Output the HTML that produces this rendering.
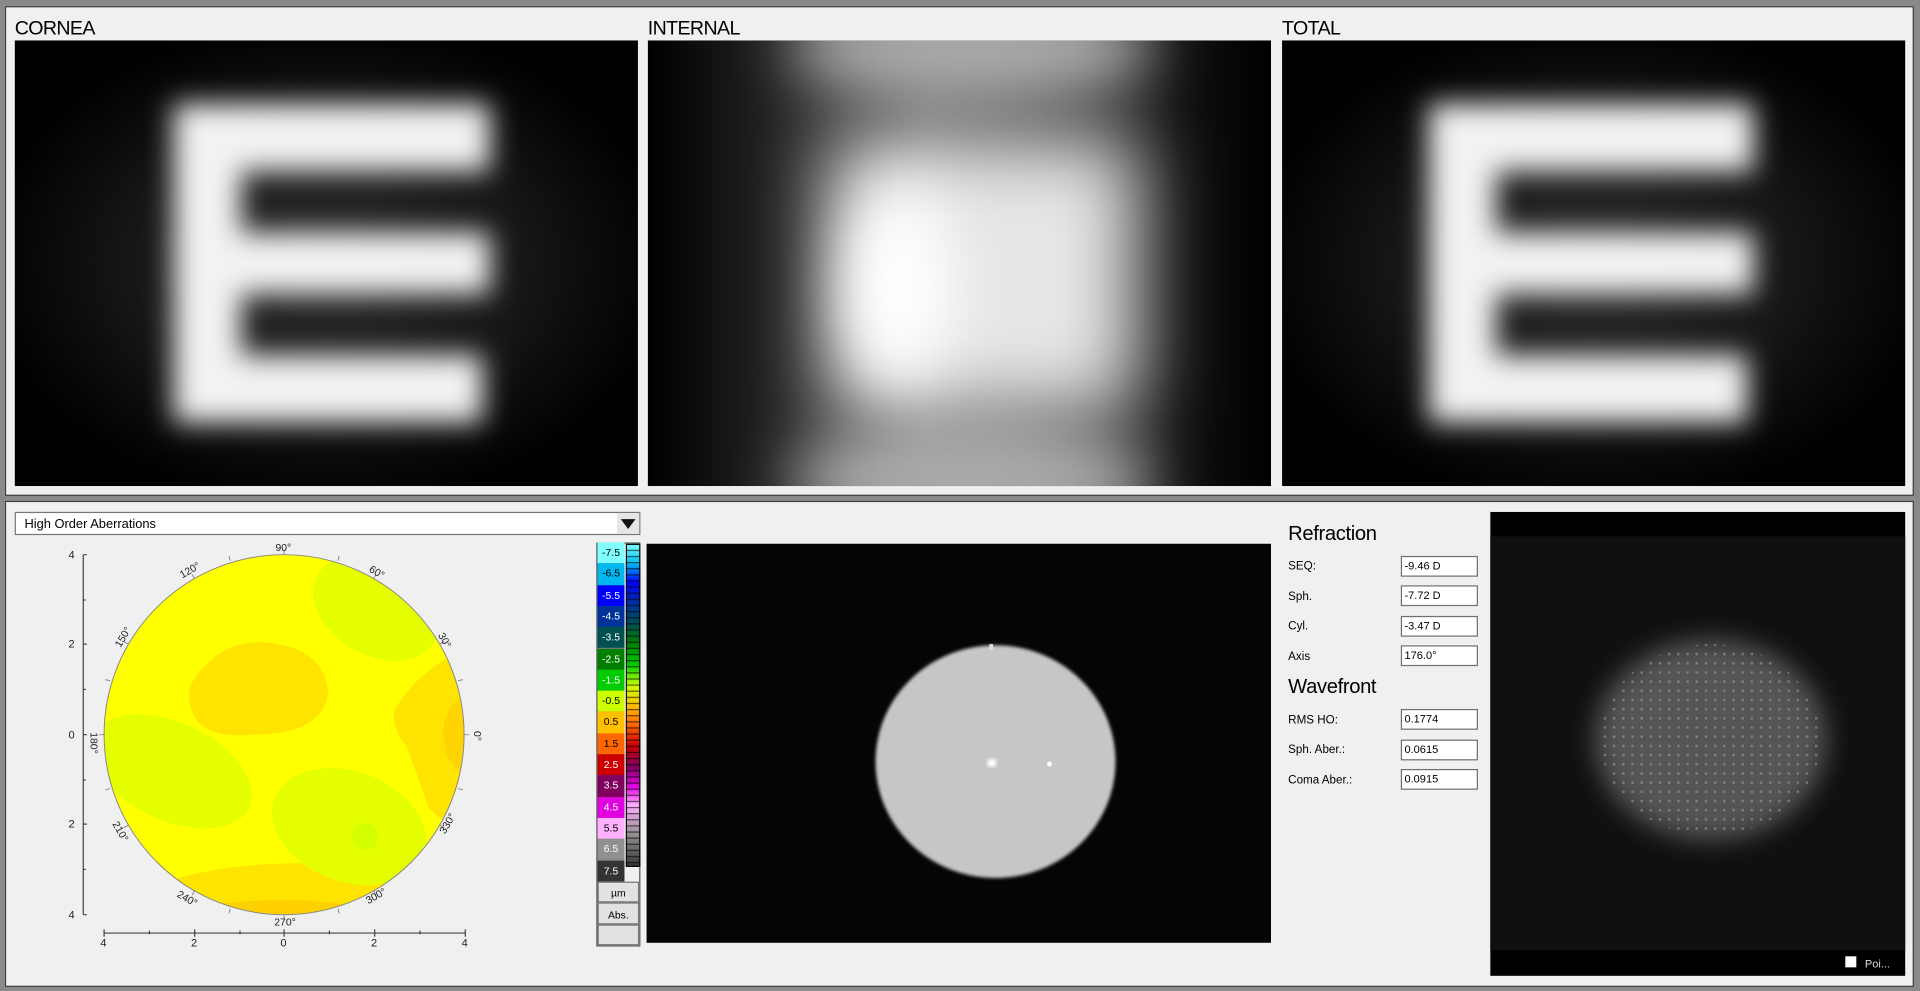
<!DOCTYPE html>
<html><head><meta charset="utf-8"><style>
html,body{margin:0;padding:0;background:#8a8a8a;width:1920px;height:991px;overflow:hidden}
#w{position:absolute;left:0;top:0;width:1568px;height:809px;transform:scale(1.22449);transform-origin:0 0;font-family:"Liberation Sans",sans-serif;color:#000}
.panel{position:absolute;background:#f0f0f0;border:1px solid #3a3a3a}
.abs{position:absolute}
.t{position:absolute;font-size:16px;letter-spacing:-0.5px}
.lbl{position:absolute;font-size:9.5px;left:1052px}
.box{position:absolute;left:1144px;width:59px;height:15px;border:1px solid #707070;background:#fff;font-size:9px;line-height:15px;padding-left:2px;box-sizing:content-box}
.cb{position:absolute;left:488px;width:22px;height:17.3px;font-size:8.5px;text-align:center;line-height:17px;border-bottom:1px solid #777}
</style></head><body><div id="w">
<div class="panel" style="left:4px;top:5px;width:1557px;height:398px"></div>
<div class="panel" style="left:4px;top:409px;width:1557px;height:395px"></div>
<div class="t" style="left:12px;top:15px">CORNEA</div>
<div class="t" style="left:529px;top:15px">INTERNAL</div>
<div class="t" style="left:1047px;top:15px">TOTAL</div>

<svg class="abs" style="left:12px;top:33px" width="509" height="364">
<defs><filter id="b1" x="-30%" y="-30%" width="160%" height="160%"><feGaussianBlur stdDeviation="11"/></filter>
<radialGradient id="rg" cx="0.5" cy="0.5" r="0.55"><stop offset="0" stop-color="#2c2c2c"/><stop offset="0.6" stop-color="#151515"/><stop offset="1" stop-color="#000"/></radialGradient></defs>
<rect width="509" height="364" fill="url(#rg)"/>
<g fill="#f2f2f2" filter="url(#b1)"><rect x="130" y="52" width="55" height="260"/><rect x="130" y="52" width="258" height="55"/><rect x="130" y="157" width="258" height="50"/><rect x="130" y="257" width="252" height="55"/></g>
</svg>

<svg class="abs" style="left:1047px;top:33px" width="509" height="364">
<rect width="509" height="364" fill="url(#rg)"/>
<g fill="#f2f2f2" filter="url(#b1)"><rect x="120" y="52" width="55" height="260"/><rect x="120" y="52" width="265" height="55"/><rect x="120" y="157" width="265" height="50"/><rect x="120" y="257" width="260" height="55"/></g>
</svg>

<svg class="abs" style="left:529px;top:33px" width="509" height="364">
<defs><filter id="b2" x="-60%" y="-60%" width="220%" height="220%"><feGaussianBlur stdDeviation="32"/></filter>
<filter id="b3" x="-60%" y="-100%" width="220%" height="300%"><feGaussianBlur stdDeviation="24"/></filter>
<linearGradient id="ig" x1="0" x2="1"><stop offset="0" stop-color="#000"/><stop offset="0.2" stop-color="#222"/><stop offset="0.45" stop-color="#555"/><stop offset="0.7" stop-color="#333"/><stop offset="0.85" stop-color="#111"/><stop offset="1" stop-color="#000"/></linearGradient></defs>
<rect width="509" height="364" fill="url(#ig)"/>
<ellipse cx="265" cy="5" rx="150" ry="45" fill="#aaa" filter="url(#b3)"/>
<ellipse cx="265" cy="360" rx="150" ry="45" fill="#aaa" filter="url(#b3)"/>
<rect x="150" y="80" width="250" height="225" fill="#e6e6e6" filter="url(#b2)"/>
<ellipse cx="205" cy="200" rx="45" ry="80" fill="#fff" filter="url(#b3)"/>
</svg>

<div class="abs" style="left:12px;top:418px;height:19px;border:1px solid #777;background:#fff;font-size:10.5px;line-height:19px;padding-left:7px;box-sizing:border-box;width:511px">High Order Aberrations
<div class="abs" style="right:0;top:0;width:18px;height:17px;background:#e5e5e5"><svg width="18" height="17"><path d="M3 5 L15 5 L9 13 Z" fill="#111"/></svg></div></div>

<svg class="abs" style="left:40px;top:440px" width="360" height="345" font-family="Liberation Sans" font-size="8.5">
<defs><clipPath id="cc"><circle cx="192" cy="160" r="147"/></clipPath></defs>
<g clip-path="url(#cc)">
<rect x="40" y="10" width="310" height="300" fill="#ffff00"/>
<ellipse cx="205" cy="313" rx="150" ry="48" fill="#ffe400"/>
<ellipse cx="190" cy="330" rx="120" ry="35" fill="#ffd000"/>
<path d="M115 120 Q140 80 180 85 Q225 90 228 125 Q225 160 165 160 Q110 165 115 120Z" fill="#ffe400"/>
<ellipse cx="267" cy="57" rx="55" ry="38" transform="rotate(30 267 57)" fill="#e6ff00"/>
<path d="M282 140 Q300 110 330 95 L345 90 L345 230 Q330 240 310 220 Q300 190 292 170 Q280 155 282 140Z" fill="#ffe400"/>
<ellipse cx="340" cy="160" rx="18" ry="30" fill="#ffd400"/>
<ellipse cx="100" cy="190" rx="70" ry="40" transform="rotate(25 100 190)" fill="#e6ff00"/>
<ellipse cx="245" cy="235" rx="65" ry="45" transform="rotate(20 245 235)" fill="#e6ff00"/>
<circle cx="258" cy="243" r="11" fill="#d4ff00"/>
</g>
<circle cx="192" cy="160" r="147" fill="none" stroke="#888" stroke-width="0.8"/>
<g stroke="#888" stroke-width="0.8">
<line x1="192" y1="13" x2="192" y2="9"/><line x1="192" y1="307" x2="192" y2="311"/>
<line x1="45" y1="160" x2="41" y2="160"/><line x1="339" y1="160" x2="343" y2="160"/>
<line x1="265" y1="33" x2="267" y2="29"/><line x1="119" y1="33" x2="117" y2="29"/>
<line x1="319" y1="86" x2="323" y2="84"/><line x1="65" y1="86" x2="61" y2="84"/>
<line x1="265" y1="287" x2="267" y2="291"/><line x1="119" y1="287" x2="117" y2="291"/>
<line x1="319" y1="234" x2="323" y2="236"/><line x1="65" y1="234" x2="61" y2="236"/>
<line x1="148" y1="18" x2="147" y2="14"/><line x1="236" y1="18" x2="237" y2="14"/>
<line x1="148" y1="302" x2="147" y2="306"/><line x1="236" y1="302" x2="237" y2="306"/>
<line x1="50" y1="116" x2="46" y2="115"/><line x1="334" y1="116" x2="338" y2="115"/>
<line x1="50" y1="204" x2="46" y2="205"/><line x1="334" y1="204" x2="338" y2="205"/>
</g>
<g fill="#222">
<text x="185" y="10">90°</text>
<text x="262" y="30" transform="rotate(30 268 26)">60°</text>
<text x="318" y="86" transform="rotate(60 324 82)">30°</text>
<text x="342" y="158" transform="rotate(90 345 160)">0°</text>
<text x="318" y="240" transform="rotate(-60 322 236)">330°</text>
<text x="258" y="296" transform="rotate(-30 264 292)">300°</text>
<text x="184" y="316">270°</text>
<text x="105" y="296" transform="rotate(30 112 292)">240°</text>
<text x="52" y="240" transform="rotate(60 58 236)">210°</text>
<text x="36" y="164" transform="rotate(90 38 160)">180°</text>
<text x="52" y="86" transform="rotate(-60 58 82)">150°</text>
<text x="106" y="30" transform="rotate(-30 112 26)">120°</text>
</g>
<g stroke="#444" stroke-width="1">
<line x1="28" y1="13" x2="28" y2="307"/>
<line x1="28" y1="13" x2="31" y2="13"/><line x1="28" y1="86" x2="31" y2="86"/><line x1="28" y1="160" x2="31" y2="160"/><line x1="28" y1="233" x2="31" y2="233"/><line x1="28" y1="307" x2="31" y2="307"/>
<line x1="28" y1="50" x2="30" y2="50"/><line x1="28" y1="123" x2="30" y2="123"/><line x1="28" y1="197" x2="30" y2="197"/><line x1="28" y1="270" x2="30" y2="270"/>
<line x1="45" y1="322" x2="340" y2="322"/>
<line x1="45" y1="319" x2="45" y2="325"/><line x1="119" y1="319" x2="119" y2="325"/><line x1="192" y1="319" x2="192" y2="325"/><line x1="266" y1="319" x2="266" y2="325"/><line x1="340" y1="319" x2="340" y2="325"/>
<line x1="82" y1="320" x2="82" y2="323"/><line x1="156" y1="320" x2="156" y2="323"/><line x1="229" y1="320" x2="229" y2="323"/><line x1="303" y1="320" x2="303" y2="323"/>
</g>
<g fill="#222" font-size="9"><text x="16" y="16">4</text><text x="16" y="89">2</text><text x="16" y="163">0</text><text x="16" y="236">2</text><text x="16" y="310">4</text>
<text x="42" y="333">4</text><text x="116" y="333">2</text><text x="189" y="333">0</text><text x="263" y="333">2</text><text x="337" y="333">4</text></g>
</svg>

<div class="abs" style="left:487px;top:443px;width:36px;height:330px;border:1px solid #555;background:#f0f0f0;box-sizing:border-box"></div>
<svg class="abs" style="left:511px;top:444px" width="12" height="264">
<defs><linearGradient id="cg" x1="0" y1="0" x2="0" y2="1">
<stop offset="0" stop-color="#80ffff"/><stop offset="0.06" stop-color="#00c0f0"/><stop offset="0.12" stop-color="#0000ff"/><stop offset="0.19" stop-color="#003399"/><stop offset="0.25" stop-color="#005050"/><stop offset="0.31" stop-color="#008000"/><stop offset="0.375" stop-color="#00cc00"/><stop offset="0.44" stop-color="#ccff00"/><stop offset="0.5" stop-color="#ffc000"/><stop offset="0.56" stop-color="#ff6600"/><stop offset="0.625" stop-color="#cc0000"/><stop offset="0.69" stop-color="#800060"/><stop offset="0.75" stop-color="#e000e0"/><stop offset="0.81" stop-color="#ffb0ff"/><stop offset="0.9" stop-color="#909090"/><stop offset="1" stop-color="#333"/></linearGradient>
<pattern id="hp" width="12" height="5" patternUnits="userSpaceOnUse"><rect width="12" height="1" fill="#000" opacity="0.6"/></pattern></defs>
<rect width="12" height="264" fill="url(#cg)"/><rect width="12" height="264" fill="url(#hp)"/><rect x="0.5" y="0.5" width="11" height="263" fill="none" stroke="#000"/>
</svg>
<div class="cb" style="top:443px;background:#80ffff">-7.5</div>
<div class="cb" style="top:460.3px;background:#00b8f0">-6.5</div>
<div class="cb" style="top:477.6px;background:#0000ff;color:#fff">-5.5</div>
<div class="cb" style="top:494.9px;background:#003399;color:#fff">-4.5</div>
<div class="cb" style="top:512.2px;background:#005050;color:#fff">-3.5</div>
<div class="cb" style="top:529.5px;background:#008000;color:#fff">-2.5</div>
<div class="cb" style="top:546.8px;background:#00cc00;color:#fff">-1.5</div>
<div class="cb" style="top:564.1px;background:#ccff00">-0.5</div>
<div class="cb" style="top:581.4px;background:#ffc000">0.5</div>
<div class="cb" style="top:598.7px;background:#ff6600">1.5</div>
<div class="cb" style="top:616px;background:#cc0000;color:#fff">2.5</div>
<div class="cb" style="top:633.3px;background:#800060;color:#fff">3.5</div>
<div class="cb" style="top:650.6px;background:#e000e0;color:#fff">4.5</div>
<div class="cb" style="top:667.9px;background:#ffb0ff">5.5</div>
<div class="cb" style="top:685.2px;background:#909090;color:#fff">6.5</div>
<div class="cb" style="top:702.5px;background:#333;color:#fff">7.5</div>
<div class="abs" style="left:488px;top:720px;width:34px;height:17px;border:1px solid #777;background:#e2e2e2;font-size:8.5px;text-align:center;line-height:17px;box-sizing:border-box">µm</div>
<div class="abs" style="left:488px;top:737px;width:34px;height:18px;border:1px solid #777;background:#e2e2e2;font-size:8.5px;text-align:center;line-height:18px;box-sizing:border-box">Abs.</div>
<div class="abs" style="left:488px;top:755px;width:34px;height:17px;border:1px solid #777;background:#e2e2e2;box-sizing:border-box"></div>

<svg class="abs" style="left:528px;top:444px" width="510" height="326">
<defs><filter id="b4"><feGaussianBlur stdDeviation="1.2"/></filter><filter id="b5"><feGaussianBlur stdDeviation="1.5"/></filter></defs>
<rect width="510" height="326" fill="#050505"/>
<ellipse cx="285" cy="178" rx="98" ry="95" fill="#c6c6c6" filter="url(#b4)"/>
<rect x="280" y="82" width="3" height="5" fill="#ddd"/>
<ellipse cx="282" cy="179" rx="4" ry="3.5" fill="#fff" filter="url(#b5)"/>
<circle cx="329" cy="180" r="2" fill="#fff"/>
</svg>

<div class="abs" style="left:1052px;top:427px;font-size:16.5px;letter-spacing:-0.3px">Refraction</div>
<div class="lbl" style="top:457px">SEQ:</div><div class="box" style="top:454px">-9.46 D</div>
<div class="lbl" style="top:482px">Sph.</div><div class="box" style="top:478px">-7.72 D</div>
<div class="lbl" style="top:506px">Cyl.</div><div class="box" style="top:503px">-3.47 D</div>
<div class="lbl" style="top:531px">Axis</div><div class="box" style="top:527px">176.0°</div>
<div class="abs" style="left:1052px;top:552px;font-size:16.5px;letter-spacing:-0.3px">Wavefront</div>
<div class="lbl" style="top:583px">RMS HO:</div><div class="box" style="top:579px">0.1774</div>
<div class="lbl" style="top:607px">Sph. Aber.:</div><div class="box" style="top:604px">0.0615</div>
<div class="lbl" style="top:632px">Coma Aber.:</div><div class="box" style="top:628px">0.0915</div>

<svg class="abs" style="left:1217px;top:418px" width="339" height="379">
<defs><filter id="b6" x="-50%" y="-50%" width="200%" height="200%"><feGaussianBlur stdDeviation="10"/></filter>
<pattern id="dp" width="7.5" height="7.5" patternUnits="userSpaceOnUse"><circle cx="3.7" cy="3.7" r="1.1" fill="#999" opacity="0.6"/></pattern>
<clipPath id="ec"><ellipse cx="180" cy="186" rx="90" ry="78"/></clipPath></defs>
<rect width="339" height="379" fill="#000"/>
<rect y="20" width="339" height="338" fill="#101010"/>
<ellipse cx="180" cy="186" rx="95" ry="82" fill="#555" filter="url(#b6)"/>
<rect x="80" y="100" width="200" height="170" fill="url(#dp)" clip-path="url(#ec)"/>
<rect x="290" y="363" width="9" height="9" fill="#fff"/>
<text x="306" y="372" font-family="Liberation Sans" font-size="9" fill="#ddd">Poi...</text>
</svg>
</div></body></html>
